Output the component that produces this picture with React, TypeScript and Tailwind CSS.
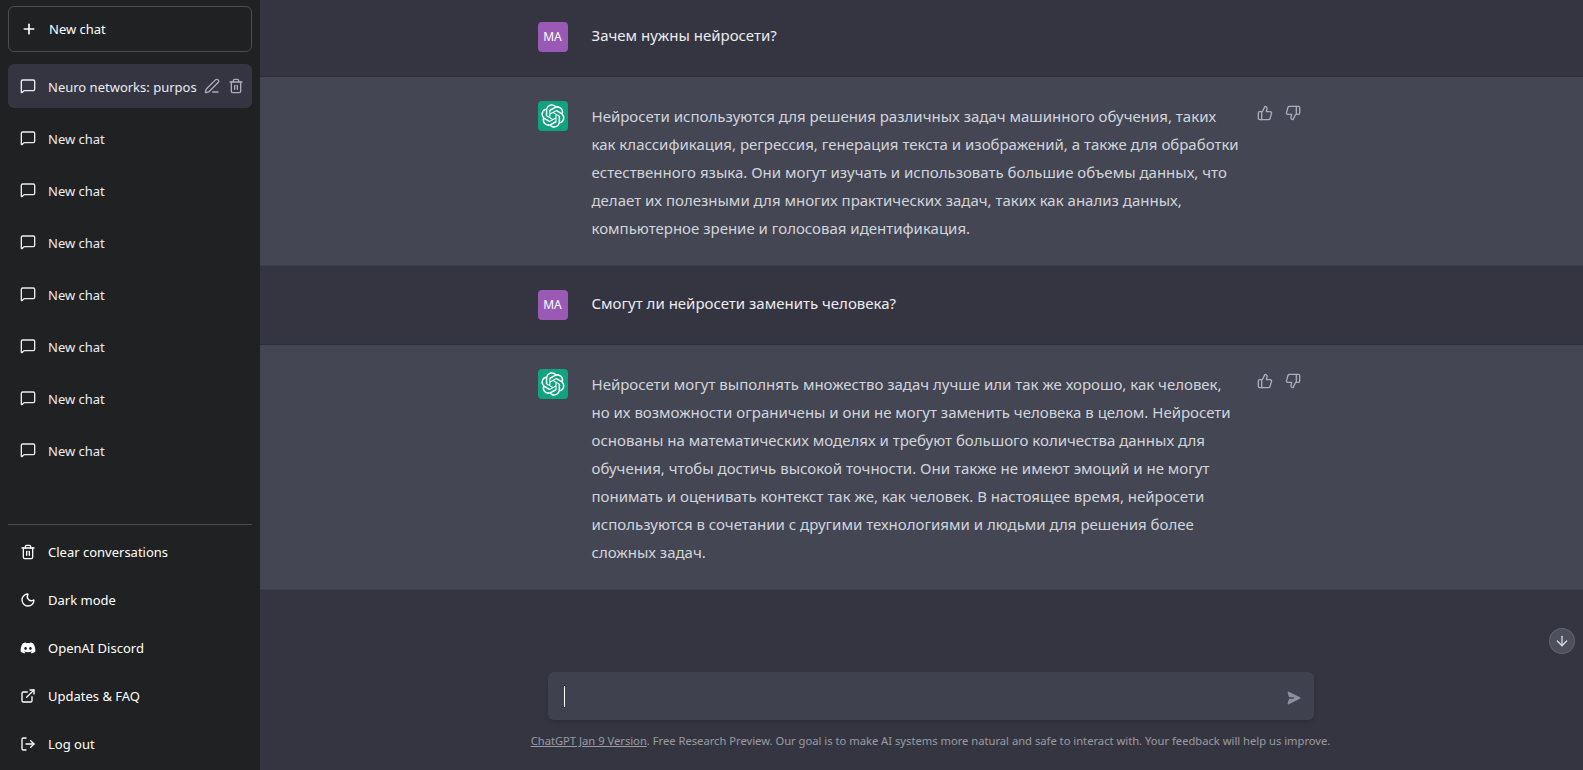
import React from 'react';
import { Plus, MessageSquare, PenLine, Trash2, Moon, ExternalLink, LogOut, ThumbsUp, ThumbsDown, ArrowDown } from 'lucide-react';
import { FaDiscord } from 'react-icons/fa';

const oldChats = Array(7).fill('New chat');

const footerLinks = [
  { label: 'Clear conversations', icon: <Trash2 className="w-4 h-4" strokeWidth={2} /> },
  { label: 'Dark mode', icon: <Moon className="w-4 h-4" strokeWidth={2} /> },
  { label: 'OpenAI Discord', icon: <FaDiscord className="w-4 h-4" /> },
  { label: 'Updates & FAQ', icon: <ExternalLink className="w-4 h-4" strokeWidth={2} /> },
  { label: 'Log out', icon: <LogOut className="w-4 h-4" strokeWidth={2} /> },
];

const messages = [
  { role: 'user', lines: ['Зачем нужны нейросети?'] },
  {
    role: 'bot',
    lines: [
      'Нейросети используются для решения различных задач машинного обучения, таких',
      'как классификация, регрессия, генерация текста и изображений, а также для обработки',
      'естественного языка. Они могут изучать и использовать большие объемы данных, что',
      'делает их полезными для многих практических задач, таких как анализ данных,',
      'компьютерное зрение и голосовая идентификация.',
    ],
  },
  { role: 'user', lines: ['Смогут ли нейросети заменить человека?'] },
  {
    role: 'bot',
    lines: [
      'Нейросети могут выполнять множество задач лучше или так же хорошо, как человек,',
      'но их возможности ограничены и они не могут заменить человека в целом. Нейросети',
      'основаны на математических моделях и требуют большого количества данных для',
      'обучения, чтобы достичь высокой точности. Они также не имеют эмоций и не могут',
      'понимать и оценивать контекст так же, как человек. В настоящее время, нейросети',
      'используются в сочетании с другими технологиями и людьми для решения более',
      'сложных задач.',
    ],
  },
];

function OpenAILogo() {
  return (
    <svg viewBox="0 0 41 41" fill="none" className="w-6 h-6 text-white">
      <path
        fill="currentColor"
        d="M37.5324 16.8707C37.9808 15.5241 38.1363 14.0974 37.9886 12.6859C37.8409 11.2744 37.3934 9.91076 36.676 8.68622C35.6126 6.83404 33.9882 5.3676 32.0373 4.4985C30.0864 3.62941 27.9098 3.40259 25.8215 3.85078C24.8796 2.7893 23.7219 1.94125 22.4257 1.36341C21.1295 0.785575 19.7249 0.491269 18.3058 0.500197C16.1708 0.495044 14.0893 1.16803 12.3614 2.42214C10.6335 3.67624 9.34853 5.44666 8.6917 7.47815C7.30085 7.76286 5.98686 8.3414 4.8377 9.17505C3.68854 10.0087 2.73073 11.0782 2.02839 12.312C0.956464 14.1591 0.498905 16.2988 0.721698 18.4228C0.944492 20.5467 1.83612 22.5449 3.268 24.1293C2.81966 25.4759 2.66413 26.9026 2.81182 28.3141C2.95951 29.7256 3.40701 31.0892 4.12437 32.3138C5.18791 34.1659 6.8123 35.6322 8.76321 36.5013C10.7141 37.3704 12.8907 37.5973 14.9789 37.1492C15.9208 38.2107 17.0786 39.0587 18.3747 39.6366C19.6709 40.2144 21.0755 40.5087 22.4946 40.4998C24.6307 40.5054 26.7133 39.8321 28.4418 38.5772C30.1704 37.3223 31.4556 35.5506 32.1119 33.5179C33.5027 33.2332 34.8167 32.6547 35.9659 31.821C37.115 30.9874 38.0728 29.9178 38.7752 28.684C39.8458 26.8371 40.3023 24.6979 40.0789 22.5748C39.8556 20.4517 38.9639 18.4544 37.5324 16.8707ZM22.4978 37.8849C20.7443 37.8874 19.0459 37.2733 17.6994 36.1501C17.7601 36.117 17.8666 36.0586 17.936 36.0161L25.9004 31.4156C26.1003 31.3019 26.2663 31.137 26.3813 30.9378C26.4964 30.7386 26.5563 30.5124 26.5549 30.2825V19.0542L29.9213 20.998C29.9389 21.0068 29.9541 21.0198 29.9656 21.0359C29.977 21.052 29.9842 21.0707 29.9867 21.0902V30.3889C29.9842 32.375 29.1946 34.2791 27.7909 35.6841C26.3872 37.0892 24.4838 37.8806 22.4978 37.8849ZM6.39227 31.0064C5.51397 29.4888 5.19742 27.7107 5.49804 25.9832C5.55718 26.0187 5.66048 26.0818 5.73461 26.1244L13.699 30.7248C13.8975 30.8408 14.1233 30.902 14.3532 30.902C14.583 30.902 14.8088 30.8408 15.0073 30.7248L24.731 25.1103V28.9979C24.7321 29.0177 24.7283 29.0376 24.7199 29.0556C24.7115 29.0736 24.6988 29.0893 24.6829 29.1012L16.6317 33.7497C14.9096 34.7416 12.8643 35.0097 10.9447 34.4954C9.02506 33.9811 7.38785 32.7263 6.39227 31.0064ZM4.29707 13.6194C5.17156 12.0998 6.55279 10.9364 8.19885 10.3327C8.19885 10.4013 8.19491 10.5228 8.19491 10.6071V19.808C8.19351 20.0378 8.25334 20.2638 8.36823 20.4629C8.48312 20.6619 8.64893 20.8267 8.84863 20.9404L18.5723 26.5542L15.206 28.4979C15.1894 28.5089 15.1703 28.5155 15.1505 28.5173C15.1307 28.5191 15.1107 28.516 15.0924 28.5082L7.04046 23.8557C5.32135 22.8601 4.06716 21.2235 3.55289 19.3046C3.03862 17.3858 3.30624 15.3413 4.29707 13.6194ZM31.955 20.0556L22.2312 14.4411L25.5976 12.4981C25.6142 12.4872 25.6333 12.4805 25.6531 12.4787C25.6729 12.4769 25.6928 12.4801 25.7111 12.4879L33.7631 17.1364C34.9967 17.849 36.0017 18.8982 36.6606 20.1613C37.3194 21.4244 37.6047 22.849 37.4832 24.2684C37.3617 25.6878 36.8382 27.0432 35.9743 28.1759C35.1103 29.3086 33.9415 30.1717 32.6047 30.6641C32.6047 30.5947 32.6047 30.4733 32.6047 30.3889V21.188C32.6066 20.9586 32.5474 20.7328 32.4332 20.5338C32.319 20.3348 32.154 20.1698 31.955 20.0556ZM35.3055 15.0128C35.2464 14.9765 35.1431 14.9142 35.069 14.8717L27.1045 10.2712C26.906 10.1554 26.6803 10.0943 26.4504 10.0943C26.2206 10.0943 25.9948 10.1554 25.7963 10.2712L16.0726 15.8858V11.9982C16.0715 11.9783 16.0753 11.9585 16.0837 11.9405C16.0921 11.9225 16.1048 11.9068 16.1207 11.8949L24.1719 7.25025C25.4053 6.53903 26.8158 6.19376 28.2383 6.25482C29.6608 6.31589 31.0364 6.78077 32.2044 7.59508C33.3723 8.40939 34.2842 9.53945 34.8334 10.8531C35.3826 12.1667 35.5464 13.6095 35.3055 15.0128ZM14.2424 21.9419L10.8752 19.9981C10.8576 19.9893 10.8423 19.9763 10.8309 19.9602C10.8195 19.9441 10.8122 19.9254 10.8098 19.9058V10.6071C10.8107 9.18295 11.2173 7.78848 11.9819 6.58696C12.7466 5.38544 13.8377 4.42659 15.1275 3.82264C16.4173 3.21869 17.8524 2.99464 19.2649 3.1767C20.6775 3.35876 22.0089 3.93941 23.1034 4.85067C23.0427 4.88379 22.937 4.94215 22.8668 4.98473L14.9024 9.58517C14.7025 9.69878 14.5366 9.86356 14.4215 10.0626C14.3065 10.2616 14.2466 10.4877 14.2479 10.7175L14.2424 21.9419ZM16.071 17.9991L20.4018 15.4978L24.7325 17.9975V22.9985L20.4018 25.4983L16.071 22.9985V17.9991Z"
      />
    </svg>
  );
}

function Sidebar() {
  return (
    <aside className="w-[260px] shrink-0 h-full bg-[#202123] flex flex-col px-2 pt-[6px] text-[13px] text-[#ececf1]">
      <div className="h-[46px] shrink-0 rounded-md border border-white/20 flex items-center gap-3 px-3 text-white">
        <Plus className="w-4 h-4" strokeWidth={2.5} />
        <span className="pt-[2px]">New chat</span>
      </div>
      <div className="flex-1 flex flex-col gap-2 mt-3">
        <div className="h-11 rounded-md bg-[#343541] flex items-center pl-3 pr-2">
          <MessageSquare className="w-4 h-4 shrink-0 mr-3" strokeWidth={2} />
          <span className="flex-1 pt-[3px] whitespace-nowrap">Neuro networks: purpos</span>
          <div className="flex gap-2 text-[#acacbe]">
            <PenLine className="w-4 h-4" strokeWidth={2} />
            <Trash2 className="w-4 h-4" strokeWidth={2} />
          </div>
        </div>
        {oldChats.map((name, i) => (
          <div key={i} className="h-11 rounded-md flex items-center gap-3 px-3">
            <MessageSquare className="w-4 h-4 shrink-0" strokeWidth={2} />
            <span className="pt-[3px]">{name}</span>
          </div>
        ))}
      </div>
      <div className="border-t border-white/20 pt-[3px] pb-[2px]">
        {footerLinks.map((link) => (
          <div key={link.label} className="h-12 flex items-center gap-3 px-3 text-white">
            {link.icon}
            <span className="pt-[1px]">{link.label}</span>
          </div>
        ))}
      </div>
    </aside>
  );
}

function Message({ role, lines }: { role: string; lines: string[] }) {
  const isBot = role === 'bot';
  return (
    <div className={`border-b border-black/10 ${isBot ? 'bg-[#444654]' : 'bg-[#343541]'}`}>
      <div className="w-[768px] mx-auto py-6 flex">
        <div
          className={`w-[30px] h-[30px] shrink-0 mr-6 rounded-sm flex items-center justify-center text-xs text-white ${isBot ? 'bg-[#10a37f]' : 'bg-[#9b59b6]'}`}
        >
          {isBot ? <OpenAILogo /> : 'MA'}
        </div>
        <div
          className={`w-[665px] shrink-0 text-[15px] leading-7 whitespace-nowrap ${isBot ? 'text-[#d1d5db] mt-px -mb-px' : 'text-[#ececf1] -mt-px mb-px'}`}
        >
          {lines.map((line, i) => (
            <div key={i}>{line}</div>
          ))}
        </div>
        {isBot && (
          <div className="flex gap-3 text-[#acacbe] pt-1">
            <ThumbsUp className="w-4 h-4" strokeWidth={2} />
            <ThumbsDown className="w-4 h-4" strokeWidth={2} />
          </div>
        )}
      </div>
    </div>
  );
}

export default function App() {
  return (
    <div className="w-full h-[770px] flex overflow-hidden bg-[#343541] font-['Noto_Sans',sans-serif]">
      <Sidebar />
      <main className="relative flex-1 flex flex-col">
        <div className="flex-1 -mt-[2px]">
          {messages.map((m, i) => (
            <Message key={i} role={m.role} lines={m.lines} />
          ))}
        </div>

        <button className="absolute right-[8px] top-[628px] w-[26px] h-[26px] rounded-full bg-[#4e4f5d] border border-white/10 flex items-center justify-center text-[#d9d9e3]">
          <ArrowDown className="w-4 h-4" strokeWidth={2} />
        </button>

        <div className="pb-[21px] pl-[18px] flex flex-col items-center">
          <div className="w-[766px] h-12 rounded-md bg-[#40414f] shadow-md flex items-center justify-between pl-4 pr-3">
            <div className="w-px h-[21px] bg-white" />
            <svg viewBox="0 0 20 20" fill="currentColor" className="w-4 h-4 mt-[3px] rotate-90 text-[#8e8ea0]">
              <path d="M10.894 2.553a1 1 0 00-1.788 0l-7 14a1 1 0 001.169 1.409l5-1.429A1 1 0 009 15.571V11a1 1 0 112 0v4.571a1 1 0 00.725.962l5 1.428a1 1 0 001.17-1.408l-7-14z" />
            </svg>
          </div>
          <p className="mt-[13px] text-[11.2px] text-white/50 leading-4">
            <span className="underline">ChatGPT Jan 9 Version</span>. Free Research Preview. Our goal is to make AI systems more natural and safe to interact with. Your feedback will help us improve.
          </p>
        </div>
      </main>
    </div>
  );
}
